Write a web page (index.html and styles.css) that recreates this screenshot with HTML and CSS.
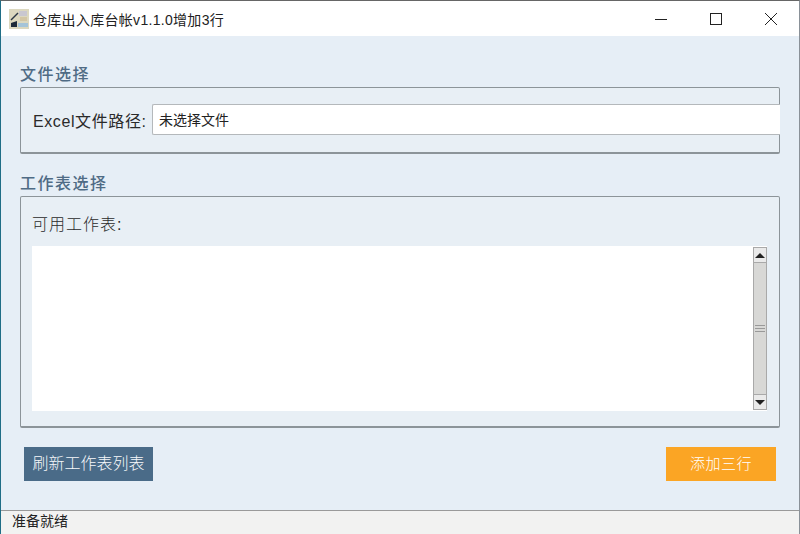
FILE: index.html
```html
<!DOCTYPE html>
<html lang="zh-CN">
  <head>
    <meta charset="UTF-8" />
    <meta name="viewport" content="width=device-width, initial-scale=1.0" />
    <title>仓库出入库台帐</title>
    <link rel="stylesheet" href="styles.css">
  </head>
  <body>
    <div class="window">
      <header class="titlebar">
        <svg class="app-icon" width="20" height="20" viewBox="0 0 20 20">
          <rect width="20" height="20" fill="#dcd8bf" />
          <rect x="10" y="2" width="8" height="5" fill="#c9c7d0" />
          <rect x="11" y="8" width="7" height="4" fill="#d3c6a4" />
          <rect x="9" y="14" width="10" height="4" fill="#a5c4d8" />
          <path d="M2 18 L2 14 L8 12 L8 18 Z" fill="#1d2a3a" />
          <path d="M2 11 L9 4" stroke="#2a3644" stroke-width="1.4" />
        </svg>
        <span class="app-title">仓库出入库台帐v1.1.0增加3行</span>
        <div class="win-controls">
          <svg class="win-btn" width="14" height="14" viewBox="0 0 14 14">
            <path d="M1 7.5 H13" stroke="#222" stroke-width="1" />
          </svg>
          <svg class="win-btn" width="14" height="14" viewBox="0 0 14 14">
            <rect x="1.5" y="1.5" width="11" height="11" fill="none" stroke="#222" stroke-width="1" />
          </svg>
          <svg class="win-btn" width="14" height="14" viewBox="0 0 14 14">
            <path d="M1 1 L13 13 M13 1 L1 13" stroke="#222" stroke-width="1" />
          </svg>
        </div>
      </header>

      <main class="content">
        <h2 class="section-title first">文件选择</h2>
        <section class="group file-group">
          <label class="field-label" for="path">Excel文件路径:</label>
          <input class="path-input" id="path" type="text" value="未选择文件" />
        </section>

        <h2 class="section-title">工作表选择</h2>
        <section class="group sheet-group">
          <div class="field-label">可用工作表:</div>
          <div class="listbox">
            <div class="scrollbar">
              <div class="scroll-btn"><span class="arrow-up"></span></div>
              <div class="scroll-thumb"><span class="grip"></span></div>
              <div class="scroll-btn"><span class="arrow-down"></span></div>
            </div>
          </div>
        </section>

        <div class="actions">
          <button class="btn btn-refresh" type="button">刷新工作表列表</button>
          <button class="btn btn-add" type="button">添加三行</button>
        </div>
      </main>

      <footer class="statusbar">准备就绪</footer>
    </div>
  </body>
</html>
```

FILE: styles.css
```css
* {
  box-sizing: border-box;
}
body {
  margin: 0;
  font-family: "Liberation Sans", "Noto Sans CJK SC", sans-serif;
  color: #222;
  background: #e6eef6;
}
.window {
  width: 800px;
  height: 534px;
  display: flex;
  flex-direction: column;
  border-top: 1px solid #666;
  border-left: 1px solid #1f6d86;
  border-right: 1px solid #8a9198;
  overflow: hidden;
}
.titlebar {
  height: 35px;
  flex: none;
  display: flex;
  align-items: center;
  padding-left: 8px;
  background: white;
}
.app-icon {
  margin-right: 4px;
}
.app-title {
  font-size: 14px;
  letter-spacing: 0.3px;
  color: #222;
}
.win-controls {
  margin-left: auto;
  margin-right: 21px;
  display: flex;
  gap: 41px;
}
.content {
  flex: 1;
  display: flex;
  flex-direction: column;
  padding: 0 19px 0 19px;
}
.section-title {
  margin: 0;
  height: 26px;
  line-height: 28px;
  font-size: 16px;
  font-weight: 500;
  letter-spacing: 1.5px;
  color: #4f6b85;
}
.section-title.first {
  margin-top: 25px;
}
.file-group + .section-title {
  margin-top: 16px;
}
.group {
  border: 1px solid #8c9499;
  border-bottom-width: 2px;
  border-radius: 2px;
  background: #e8eff5;
}
.field-label {
  font-size: 16px;
  letter-spacing: 0.6px;
  color: #2a2a2a;
}
.file-group {
  height: 67px;
  display: flex;
  align-items: center;
  padding-left: 12px;
}
.file-group .field-label {
  flex: none;
  width: 119px;
  white-space: nowrap;
}
.path-input {
  flex: none;
  width: 628px;
  height: 31px;
  margin-right: -1px;
  margin-top: -2px;
  padding: 0 6px;
  border: 1px solid #b4b8bb;
  border-right: none;
  border-radius: 2px 0 0 2px;
  background: white;
  font-family: inherit;
  font-size: 14px;
  color: #222;
  outline: none;
}
.sheet-group {
  height: 232px;
  padding: 17px 12px 0 11px;
}
.sheet-group .field-label {
  height: 32px;
  line-height: 22px;
  font-weight: 300;
  letter-spacing: 1px;
}
.listbox {
  height: 165px;
  background: white;
  display: flex;
  justify-content: flex-end;
  padding: 1px 0 1px 0;
}
.scrollbar {
  width: 14px;
  display: flex;
  flex-direction: column;
  background: #dcdcda;
  border: 1px solid #a9a9a9;
}
.scroll-btn {
  height: 14px;
  flex: none;
  display: flex;
  align-items: center;
  justify-content: center;
  background: #eaeaea;
}
.arrow-up {
  border-left: 5px solid transparent;
  border-right: 5px solid transparent;
  border-bottom: 5px solid #222;
}
.arrow-down {
  border-left: 5px solid transparent;
  border-right: 5px solid transparent;
  border-top: 5px solid #222;
}
.scroll-thumb {
  flex: 1;
  display: flex;
  align-items: center;
  justify-content: center;
  background: #d8d8d6;
  border-top: 1px solid #a9a9a9;
  border-bottom: 1px solid #a9a9a9;
}
.grip {
  width: 10px;
  height: 7px;
  border-top: 1px solid #999;
  border-bottom: 1px solid #999;
  background: linear-gradient(#999, #999) center / 100% 1px no-repeat;
}
.actions {
  display: flex;
  justify-content: space-between;
  padding: 0 4px;
  margin-top: 19px;
}
.btn {
  height: 34px;
  padding: 0 0 4px 0;
  border: none;
  color: #f6f8fa;
  font-family: inherit;
  font-size: 16px;
  font-weight: 300;
  cursor: pointer;
}
.btn-refresh {
  width: 129px;
  background: #4a6b88;
}
.btn-add {
  width: 110px;
  background: #fba524;
  color: white;
  font-size: 15px;
  letter-spacing: 0.5px;
}
.statusbar {
  height: 24px;
  flex: none;
  border-top: 1px solid #9a9a9a;
  background: #f2f2f1;
  padding-left: 11px;
  line-height: 21px;
  font-size: 14px;
  color: #222;
}
```
